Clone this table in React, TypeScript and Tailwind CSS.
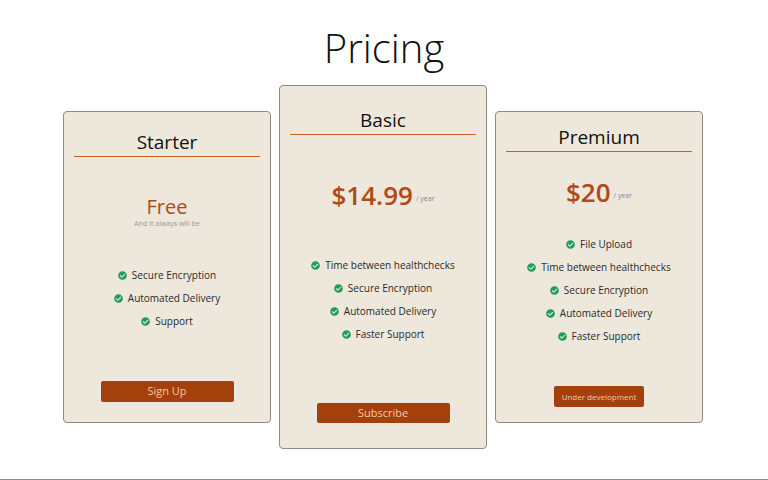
import { FaCheckCircle } from 'react-icons/fa'

const font = { fontFamily: '"Open Sans", "DejaVu Sans", sans-serif' }

function Feature({ label }: { label: string }) {
  return (
    <li className="flex h-[23px] items-center justify-center gap-[5px] text-[10px] text-[#2a2a2a]">
      <FaCheckCircle className="h-[9px] w-[9px] text-[#1f9d5a]" />
      <span>{label}</span>
    </li>
  )
}

function Title({ children }: { children: string }) {
  return (
    <div className="border-b border-[#c2612a] text-center text-[19px] font-medium leading-[28px] text-[#111]">
      {children}
    </div>
  )
}

function Price({ amount }: { amount: string }) {
  return (
    <div className="flex items-end justify-center gap-[3px] text-[#b04a16]">
      <span className="text-[26px] font-semibold leading-[34px]">{amount}</span>
      <span className="mb-[8px] text-[7px] text-[#888]">/ year</span>
    </div>
  )
}

export default function App() {
  return (
    <div style={font} className="box-border h-[480px] border-b border-[#8c8c8c] bg-white">
      <h1 className="pt-[24px] text-center text-[40px] font-light leading-[48px] text-[#111]">Pricing</h1>
      <div className="mt-[13px] flex items-center justify-center gap-[8px] pr-[2px]">
        {/* Starter */}
        <div className="box-border flex h-[312px] w-[208px] flex-col rounded-[4px] border border-[#8a8a85] bg-[#eee7db] px-[10px] pt-[16px]">
          <Title>Starter</Title>
          <div className="mt-[38px] text-center text-[20px] font-medium leading-[24px] text-[#b04a16]">Free</div>
          <div className="text-center text-[7px] leading-[10px] text-[#9a9a9a]">And it always will be</div>
          <ul className="mt-[35px]">
            <Feature label="Secure Encryption" />
            <Feature label="Automated Delivery" />
            <Feature label="Support" />
          </ul>
          <button className="mx-auto mt-[48px] h-[21px] w-[133px] rounded-[2px] bg-[#a3400b] text-[11px] text-[#f6c9a0]">
            Sign Up
          </button>
        </div>

        {/* Basic */}
        <div className="box-border flex h-[364px] w-[208px] flex-col rounded-[4px] border border-[#8a8a85] bg-[#eee7db] px-[10px] pt-[20px]">
          <Title>Basic</Title>
          <div className="mt-[43px]">
            <Price amount="$14.99" />
          </div>
          <ul className="mt-[42px]">
            <Feature label="Time between healthchecks" />
            <Feature label="Secure Encryption" />
            <Feature label="Automated Delivery" />
            <Feature label="Faster Support" />
          </ul>
          <button className="mx-auto mt-[57px] h-[20px] w-[133px] rounded-[2px] bg-[#a3400b] text-[11px] text-[#f6c9a0]">
            Subscribe
          </button>
        </div>

        {/* Premium */}
        <div className="box-border flex h-[312px] w-[208px] flex-col rounded-[4px] border border-[#8a8a85] bg-[#eee7db] px-[10px] pt-[11px]">
          <Title>Premium</Title>
          <div className="mt-[23px]">
            <Price amount="$20" />
          </div>
          <ul className="mt-[24px]">
            <Feature label="File Upload" />
            <Feature label="Time between healthchecks" />
            <Feature label="Secure Encryption" />
            <Feature label="Automated Delivery" />
            <Feature label="Faster Support" />
          </ul>
          <button className="mx-auto mt-[38px] h-[21px] rounded-[2px] bg-[#a3400b] px-[8px] text-[8px] text-[#f6c9a0]">
            Under development
          </button>
        </div>
      </div>
    </div>
  )
}
